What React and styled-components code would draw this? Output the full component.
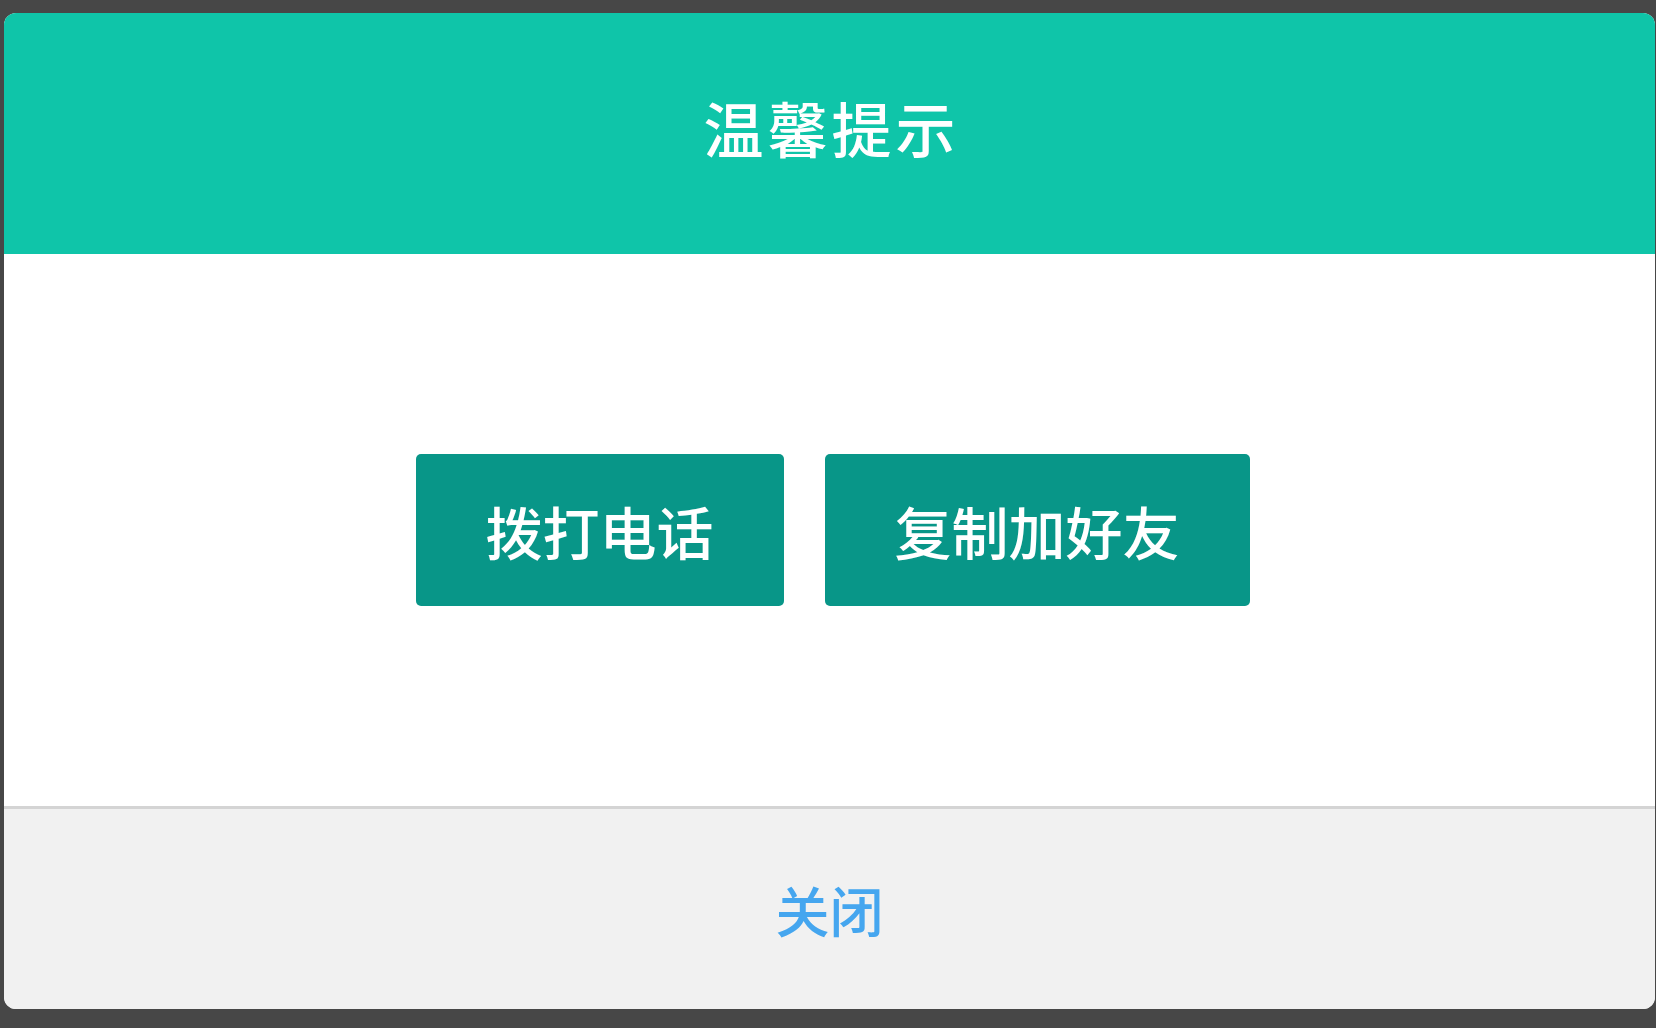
import styled, { createGlobalStyle } from "styled-components"

const Global = createGlobalStyle`
  html, body {
    margin: 0;
    padding: 0;
    background: #474747;
  }
  body {
    font-family: "Noto Sans CJK SC", "Noto Sans", sans-serif;
  }
`;

const Page = styled.div`
  padding: 13px 1px 19px 4px;
  height: 1028px;
  box-sizing: border-box;
`;

const Card = styled.div`
  display: flex;
  flex-direction: column;
  height: 996px;
  border-radius: 12px;
  overflow: hidden;
  background: #fff;
`;

const Header = styled.div`
  height: 241px;
  flex-shrink: 0;
  background: #0fc5a9;
  display: flex;
  align-items: center;
  justify-content: center;
  padding-bottom: 14px;
  box-sizing: border-box;
`;

const Title = styled.h1`
  margin: 0;
  color: #fff;
  font-size: 60px;
  font-weight: 500;
  letter-spacing: 4px;
  margin-right: -4px;
`;

const Body = styled.div`
  flex: 1;
  display: flex;
  align-items: center;
  justify-content: center;
  gap: 41px;
  padding-left: 6px;
`;

const Action = styled.button`
  height: 152px;
  padding: 0 70px;
  border: none;
  border-radius: 5px;
  background: #089688;
  color: #fff;
  font-family: inherit;
  font-size: 57px;
  font-weight: 500;
  cursor: pointer;
`;

const Footer = styled.div`
  height: 200px;
  flex-shrink: 0;
  border-top: 3px solid #d4d4d4;
  background: #f1f1f1;
  display: flex;
  align-items: center;
  justify-content: center;
`;

const Close = styled.span`
  color: #45a6ef;
  font-size: 54px;
  font-weight: 500;
  cursor: pointer;
`;

export default function App() {
  return (
    <>
      <Global />
      <Page>
        <Card>
          <Header>
            <Title>温馨提示</Title>
          </Header>
          <Body>
            <Action>拨打电话</Action>
            <Action>复制加好友</Action>
          </Body>
          <Footer>
            <Close>关闭</Close>
          </Footer>
        </Card>
      </Page>
    </>
  )
}
